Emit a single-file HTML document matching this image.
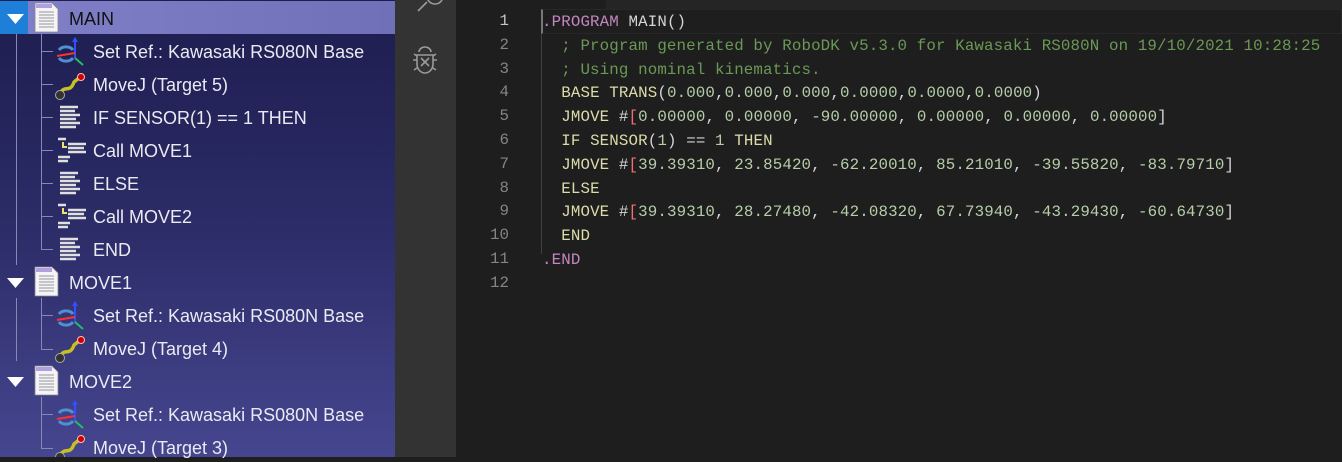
<!DOCTYPE html>
<html><head><style>
body{margin:0;width:1342px;height:457px;overflow:hidden;background:#1e1e1e;position:relative;font-family:"Liberation Sans",sans-serif}
#tree{position:absolute;left:0;top:0;width:395px;height:457px;background:linear-gradient(#1d1d4f,#2c2c68 50%,#464690)}
.hl{position:absolute;left:0;top:1px;width:395px;height:33px;background:linear-gradient(90deg,#8080c8,#7070b8)}
.ab{position:absolute;left:0;top:1px;width:28px;height:33px;background:#1e7fd8}
.t{position:absolute;color:#eaeaf2;font-size:18px;line-height:20px;white-space:nowrap}
.vl{position:absolute;width:1px;background:#8888b8}
#act{position:absolute;left:395px;top:0;width:61px;height:457px;background:#333}
#ed{position:absolute;left:456px;top:0;right:0;height:457px;background:#1e1e1e}
.ln{position:absolute;left:0;width:53px;text-align:right;color:#858585;font:15.8px/24px "Liberation Mono",monospace}
.c{position:absolute;left:86px;color:#d4d4d4;font:15.8px/24px "Liberation Mono",monospace;white-space:pre;letter-spacing:0.13px}
.k{color:#dcdcaa}.n{color:#b5cea8}.g{color:#6a9955}.p{color:#c586c0}.b{color:#f07070}
</style></head><body>
<div id="tree">
<div class="hl"></div><div class="ab"></div>
<div class="vl" style="left:16px;top:34px;height:231px"></div>
<div class="vl" style="left:16px;top:298px;height:63px"></div>
<div class="vl" style="left:41px;top:34px;height:216px"></div>
<div class="vl" style="left:41px;top:298px;height:52px"></div>
<div class="vl" style="left:41px;top:397px;height:52px"></div>
<svg width="395" height="457" style="position:absolute;left:0;top:0">
<defs>
<g id="tri"><path d="M0 0h17l-8.5 10z" fill="#fff"/></g>
<g id="doc"><path d="M0 0h17l6 6v23h-23z" fill="#f4f4f8" stroke="#888" stroke-width="0.8"/><path d="M1 1h16v4h-16z" fill="#b0a0e0"/><path d="M4 9h15M4 12h15M4 15h15M4 18h15M4 21h15M4 24h15" stroke="#999" stroke-width="1"/></g>
<g id="ref"><path d="M20 2v20" stroke="#3050ff" stroke-width="2"/><path d="M17 6l3-5 3 5z" fill="#3050ff"/><path d="M20 22l8 7" stroke="#20c060" stroke-width="2"/><path d="M2 20l18-3" stroke="#ff3030" stroke-width="2"/><path d="M4 14a8 6 0 0 1 14 0M18 22a8 6 0 0 1-14 0" stroke="#5090d0" stroke-width="3" fill="none"/></g>
<g id="mv"><path d="M5 22c4-10 10 0 14-12l5-4" stroke="#c8c020" stroke-width="3.5" fill="none"/><circle cx="5" cy="23" r="4.5" fill="#333" stroke="#aaa"/><circle cx="26" cy="5" r="3.5" fill="#c00" stroke="#fbb"/></g>
<g id="ln"><path d="M2 3h18M2 7h15M2 11h20M2 15h16M2 19h20M2 23h16" stroke="#e0e0e0" stroke-width="2.4"/></g>
<g id="call"><path d="M2 3h8M12 8h18M12 12h16M12 16h18M2 21h12M2 25h10" stroke="#e0e0e0" stroke-width="2.4"/><path d="M7 6v5h4" stroke="#f0e070" stroke-width="2" fill="none"/></g>
</defs>
<use href="#tri" x="7" y="14"/><use href="#doc" x="35" y="3"/>
<use href="#tri" x="7" y="278"/><use href="#doc" x="35" y="267"/>
<use href="#tri" x="7" y="377"/><use href="#doc" x="35" y="366"/>
<g stroke="#8888b8"><path d="M41 51.5h12M41 84.5h12M41 117.5h12M41 150.5h12M41 183.5h12M41 216.5h12M41 249.5h12M41 315.5h12M41 349.5h12M41 414.5h12M41 448.5h12"/></g>
<use href="#ref" x="55" y="36"/><use href="#mv" x="55" y="72"/><use href="#ln" x="58" y="104"/><use href="#call" x="56" y="136"/><use href="#ln" x="58" y="170"/><use href="#call" x="56" y="202"/><use href="#ln" x="58" y="236"/>
<use href="#ref" x="55" y="300"/><use href="#mv" x="55" y="335"/>
<use href="#ref" x="55" y="399"/><use href="#mv" x="55" y="434"/>
</svg>
<div class="t" style="left:69px;top:9px;color:#111">MAIN</div>
<div class="t" style="left:93px;top:42px">Set Ref.: Kawasaki RS080N Base</div>
<div class="t" style="left:93px;top:75px">MoveJ (Target 5)</div>
<div class="t" style="left:93px;top:108px">IF SENSOR(1) == 1 THEN</div>
<div class="t" style="left:93px;top:141px">Call MOVE1</div>
<div class="t" style="left:93px;top:174px">ELSE</div>
<div class="t" style="left:93px;top:207px">Call MOVE2</div>
<div class="t" style="left:93px;top:240px">END</div>
<div class="t" style="left:69px;top:273px">MOVE1</div>
<div class="t" style="left:93px;top:306px">Set Ref.: Kawasaki RS080N Base</div>
<div class="t" style="left:93px;top:339px">MoveJ (Target 4)</div>
<div class="t" style="left:69px;top:372px">MOVE2</div>
<div class="t" style="left:93px;top:405px">Set Ref.: Kawasaki RS080N Base</div>
<div class="t" style="left:93px;top:438px">MoveJ (Target 3)</div>
</div>
<div id="act">
<svg width="61" height="457"><g stroke="#9a9a9a" stroke-width="1.6" fill="none">
<path d="M23 11l9-9"/><circle cx="40" cy="-4" r="8"/>
<path d="M24 52a6 5 0 0 1 12 0M22 55h16v9a8 9 0 0 1-16 0zM18 60h4M38 60h4M19 54l3 2M41 54l-3 2M19 70l3-2M41 70l-3-2M26 58l8 8M34 58l-8 8"/>
</g></svg>
</div>
<div id="ed">
<div style="position:absolute;left:150px;top:0;right:0;height:10px;background:#252526"></div>
<div style="position:absolute;left:85px;top:9px;right:0;height:23px;border:1px solid #282828;border-left:2px solid #777"></div>
<div style="position:absolute;left:85px;top:34px;width:1px;height:220px;background:#404040"></div>
<div class="ln" style="top:9px;color:#c6c6c6">1</div><div class="ln" style="top:33px">2</div><div class="ln" style="top:57px">3</div><div class="ln" style="top:80px">4</div><div class="ln" style="top:104px">5</div><div class="ln" style="top:128px">6</div><div class="ln" style="top:152px">7</div><div class="ln" style="top:176px">8</div><div class="ln" style="top:199px">9</div><div class="ln" style="top:223px">10</div><div class="ln" style="top:247px">11</div><div class="ln" style="top:271px">12</div>
<div class="c" style="top:10px"><span class="p">.PROGRAM</span> MAIN()</div>
<div class="c g" style="top:34px">  ; Program generated by RoboDK v5.3.0 for Kawasaki RS080N on 19/10/2021 10:28:25</div>
<div class="c g" style="top:58px">  ; Using nominal kinematics.</div>
<div class="c" style="top:81px">  <span class="k">BASE TRANS</span>(<span class="n">0.000</span>,<span class="n">0.000</span>,<span class="n">0.000</span>,<span class="n">0.0000</span>,<span class="n">0.0000</span>,<span class="n">0.0000</span>)</div>
<div class="c" style="top:105px">  <span class="k">JMOVE</span> #<span class="b">[</span><span class="n">0.00000</span>, <span class="n">0.00000</span>, <span class="n">-90.00000</span>, <span class="n">0.00000</span>, <span class="n">0.00000</span>, <span class="n">0.00000</span>]</div>
<div class="c" style="top:129px">  <span class="k">IF SENSOR</span>(<span class="n">1</span>) == <span class="n">1</span> <span class="k">THEN</span></div>
<div class="c" style="top:153px">  <span class="k">JMOVE</span> #<span class="b">[</span><span class="n">39.39310</span>, <span class="n">23.85420</span>, <span class="n">-62.20010</span>, <span class="n">85.21010</span>, <span class="n">-39.55820</span>, <span class="n">-83.79710</span>]</div>
<div class="c" style="top:177px">  <span class="k">ELSE</span></div>
<div class="c" style="top:200px">  <span class="k">JMOVE</span> #<span class="b">[</span><span class="n">39.39310</span>, <span class="n">28.27480</span>, <span class="n">-42.08320</span>, <span class="n">67.73940</span>, <span class="n">-43.29430</span>, <span class="n">-60.64730</span>]</div>
<div class="c" style="top:224px">  <span class="k">END</span></div>
<div class="c" style="top:248px"><span class="p">.END</span></div>
</div>
</body></html>
